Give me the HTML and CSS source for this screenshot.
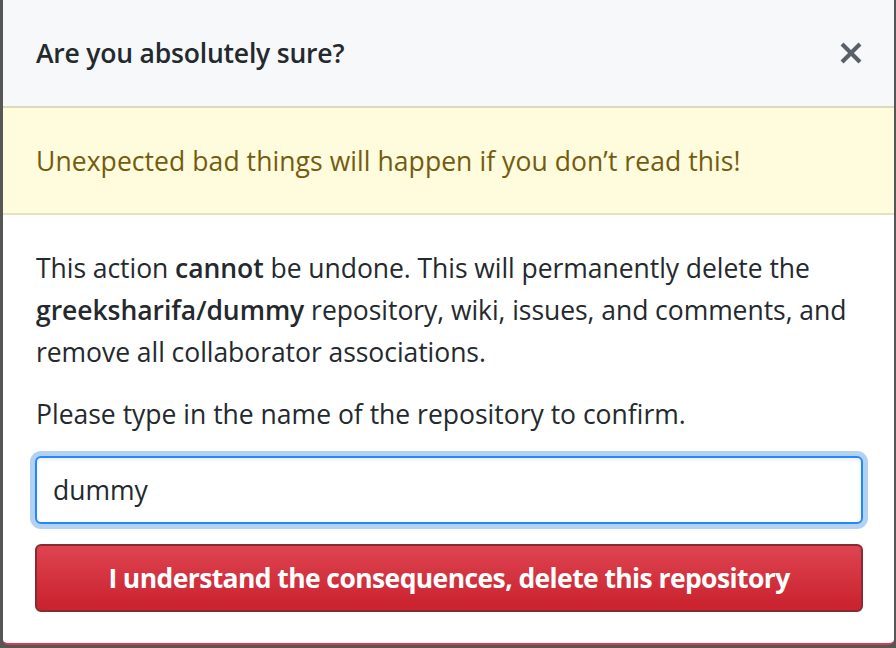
FILE: index.html
```html
<!DOCTYPE html>
<html lang="en">
<head>
<meta charset="utf-8">
<title>Are you absolutely sure?</title>
<link rel="stylesheet" href="styles.css">
</head>
<body>
<div class="dialog">
  <div class="dialog-header">
    <h3 class="dialog-title">Are you absolutely sure?</h3>
    <button class="close" type="button" aria-label="Close dialog">
      <svg width="24" height="32" viewBox="0 0 12 16" aria-hidden="true"><path fill-rule="evenodd" d="M7.48 8l3.75 3.75-1.48 1.48L6 9.48l-3.75 3.75-1.48-1.48L4.52 8 .77 4.25l1.48-1.48L6 6.52l3.75-3.75 1.48 1.48L7.48 8z"></path></svg>
    </button>
  </div>
  <div class="flash">Unexpected bad things will happen if you don’t read this!</div>
  <div class="dialog-body">
    <p class="para">This action <strong>cannot</strong> be undone. This will permanently delete the <strong>greeksharifa/dummy</strong> repository, wiki, issues, and comments, and remove all collaborator associations.</p>
    <p class="para para-confirm">Please type in the name of the repository to confirm.</p>
    <div class="field"><input class="form-control" type="text" value="dummy" aria-label="Repository name"></div>
    <button class="btn-danger" type="button">I understand the consequences, delete this repository</button>
  </div>
</div>
</body>
</html>
```
FILE: styles.css
```css
html, body {
  margin: 0;
  padding: 0;
}
body {
  background: #565656;
  width: 896px;
  height: 648px;
  overflow: hidden;
  font-family: "Open Sans", "Noto Sans", sans-serif;
  font-size: 26.5px;
  line-height: 42px;
  color: #24292e;
}
.dialog {
  margin-left: 3px;
  width: 891px;
  box-sizing: border-box;
  background: #fff;
  border-bottom: 2px solid #d73a49;
  border-radius: 0 0 5px 5px;
  overflow: hidden;
}
.dialog-header {
  display: flex;
  align-items: center;
  justify-content: space-between;
  background: #f6f8fa;
  padding: 32px 31px 32px 33px;
  border-bottom: 2px solid #ddd9bf;
}
.dialog-title {
  margin: 0;
  font-size: 26.5px;
  font-weight: 600;
  line-height: 42px;
  letter-spacing: -0.2px;
}
.close {
  border: 0;
  padding: 0;
  margin: 0;
  background: transparent;
  width: 24px;
  height: 32px;
  display: flex;
  fill: #586069;
}
.close svg {
  display: block;
}
.flash {
  background: #fffbdd;
  color: #735c0f;
  padding: 32px 31px 31px 33px;
  border-bottom: 2px solid #e6e1c1;
  letter-spacing: 0.07px;
}
.dialog-body {
  padding: 32px 31px 31px 32px;
}
.para {
  margin: 0 0 20px 1px;
  letter-spacing: -0.05px;
}
.para-confirm {
  margin-bottom: 21px;
  letter-spacing: 0;
}
.para strong {
  font-weight: 600;
}
.field {
  margin-bottom: 20px;
}
.form-control {
  display: block;
  width: 100%;
  box-sizing: border-box;
  height: 68px;
  margin: 0;
  padding: 0 16px;
  font-family: "Open Sans", "Noto Sans", sans-serif;
  font-size: 26.5px;
  color: #24292e;
  background: #fff;
  border: 2px solid #2188ff;
  border-radius: 6px;
  outline: none;
  box-shadow: inset 0 2px 4px rgba(27, 31, 35, 0.075), 0 0 0 5px rgba(3, 102, 214, 0.3);
}
.btn-danger {
  display: block;
  width: 100%;
  height: 68px;
  box-sizing: border-box;
  margin: 0;
  padding: 0 24px;
  font-family: "Open Sans", "Noto Sans", sans-serif;
  font-size: 26.5px;
  font-weight: 700;
  letter-spacing: -0.6px;
  color: #fff;
  background-color: #cb2431;
  background-image: linear-gradient(180deg, #de4450, #cb2431 90%);
  border: 2px solid #862a33;
  border-radius: 6px;
}
```
